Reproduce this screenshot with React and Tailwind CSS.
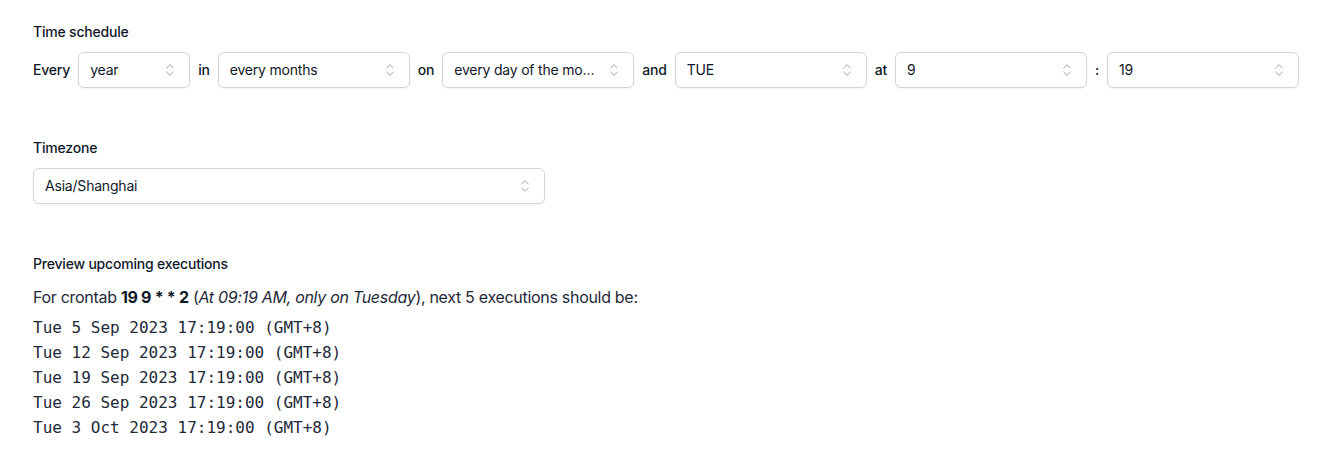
import React from 'react';
import { ChevronsUpDown } from 'lucide-react';

const Select = ({ value, className }) => (
    <div className={`relative h-9 flex items-center rounded-md border border-gray-300 bg-white pl-[11px] pr-9 text-sm tracking-[-0.2px] text-gray-900 shadow-xs ${className}`}>
        <span className="truncate">{value}</span>
        <ChevronsUpDown className="absolute right-[11px] top-1/2 -translate-y-1/2 w-4 h-4 text-gray-400" strokeWidth={1.5} />
    </div>
);

const Word = ({ children }) => (
    <span className="text-sm font-medium tracking-[-0.2px] text-gray-900">{children}</span>
);

const executions = [
    'Tue 5 Sep 2023 17:19:00 (GMT+8)',
    'Tue 12 Sep 2023 17:19:00 (GMT+8)',
    'Tue 19 Sep 2023 17:19:00 (GMT+8)',
    'Tue 26 Sep 2023 17:19:00 (GMT+8)',
    'Tue 3 Oct 2023 17:19:00 (GMT+8)',
];

export default function App() {
    return (
        <div className="min-h-screen bg-white pl-[33px] pt-[22px] text-gray-900" style={{ fontFamily: 'Inter, "Liberation Sans", sans-serif' }}>
            <div className="text-sm font-medium leading-5 tracking-[-0.2px]">Time schedule</div>
            <div className="mt-[10px] flex items-center gap-2">
                <Word>Every</Word>
                <Select value="year" className="w-28" />
                <Word>in</Word>
                <Select value="every months" className="w-48" />
                <Word>on</Word>
                <Select value="every day of the month" className="w-48" />
                <Word>and</Word>
                <Select value="TUE" className="w-48" />
                <Word>at</Word>
                <Select value="9" className="w-48" />
                <Word>:</Word>
                <Select value="19" className="w-48" />
            </div>

            <div className="mt-[50px] text-sm font-medium leading-5 tracking-[-0.2px]">Timezone</div>
            <Select value="Asia/Shanghai" className="mt-[10px] w-[512px]" />

            <div className="mt-[50px] text-sm font-medium leading-5 tracking-[-0.2px]">Preview upcoming executions</div>
            <p className="mt-[11px] text-base leading-6 tracking-[-0.3px] text-gray-800">
                For crontab <b className="font-bold text-gray-900">19 9 * * 2</b> (<i>At 09:19 AM, only on Tuesday</i>), next 5 executions should be:
            </p>
            <div className="mt-[6px] text-base leading-[25px] text-gray-800" style={{ fontFamily: '"DejaVu Sans Mono", monospace' }}>
                {executions.map(e => (
                    <div key={e}>{e}</div>
                ))}
            </div>
        </div>
    );
}
